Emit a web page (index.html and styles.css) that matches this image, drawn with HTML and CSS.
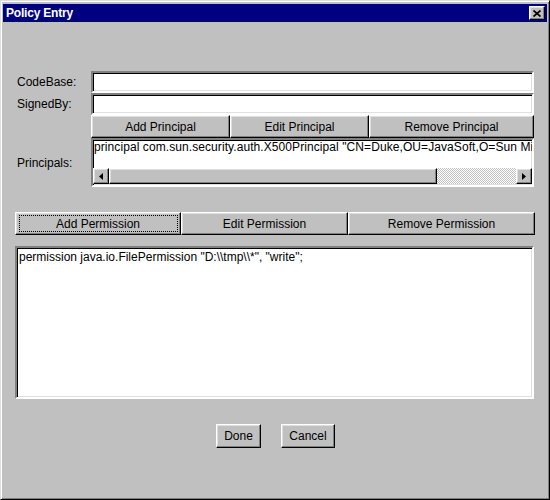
FILE: index.html
```html
<!DOCTYPE html>
<html>
<head>
<meta charset="utf-8">
<link rel="stylesheet" href="styles.css">
</head>
<body>
<div class="window">
  <div class="titlebar">
    <span class="title">Policy Entry</span>
    <button class="close raised"><svg width="8" height="7" viewBox="0 0 8 7"><path d="M0.5 0.5 L7.5 6.5 M7.5 0.5 L0.5 6.5" stroke="#000" stroke-width="1.7" fill="none"/></svg></button>
  </div>
  <div class="content">
    <div class="form">
      <span class="lbl">CodeBase:</span>
      <div class="field sunken"></div>
      <span class="lbl">SignedBy:</span>
      <div class="field sunken"></div>
      <span></span>
      <div class="btnrow principal-btns">
        <button class="btn raised">Add Principal</button>
        <button class="btn raised">Edit Principal</button>
        <button class="btn raised">Remove Principal</button>
      </div>
      <span class="lbl">Principals:</span>
      <div class="list sunken">
        <div class="list-text">principal com.sun.security.auth.X500Principal "CN=Duke,OU=JavaSoft,O=Sun Microsystems,C=US";</div>
        <div class="hscroll">
          <div class="arrow raised"><svg width="4" height="7" viewBox="0 0 4 7"><path d="M4 0 L0 3.5 L4 7 Z" fill="#000"/></svg></div>
          <div class="thumb raised"></div>
          <div class="track"></div>
          <div class="arrow raised"><svg width="4" height="7" viewBox="0 0 4 7"><path d="M0 0 L4 3.5 L0 7 Z" fill="#000"/></svg></div>
        </div>
      </div>
    </div>
    <div class="btnrow perm-btns">
      <button class="btn raised focused">Add Permission</button>
      <button class="btn raised">Edit Permission</button>
      <button class="btn raised">Remove Permission</button>
    </div>
    <div class="textarea sunken">permission java.io.FilePermission "D:\\tmp\\*", "write";</div>
    <div class="actions">
      <button class="btn raised done">Done</button>
      <button class="btn raised cancel">Cancel</button>
    </div>
  </div>
</div>
</body>
</html>
```
FILE: styles.css
```css
html, body {
  margin: 0;
  padding: 0;
  background: #c0c0c0;
}
body {
  font-family: "Liberation Sans", Arial, sans-serif;
  font-size: 12px;
  color: #000;
}
.window {
  box-sizing: border-box;
  width: 550px;
  height: 500px;
  background: #c0c0c0;
  border: 1px solid;
  border-color: #dfdfdf #000 #000 #dfdfdf;
  box-shadow: inset 1px 1px #fff, inset -1px -1px #808080;
  padding: 3px 2px 2px 2px;
  display: flex;
  flex-direction: column;
}
.titlebar {
  height: 18px;
  background: #000080;
  display: flex;
  align-items: center;
  justify-content: space-between;
  padding: 0 2px 0 3px;
  flex: none;
}
.title {
  color: #fff;
  font-weight: bold;
  font-size: 12px;
  letter-spacing: -0.2px;
}
.raised {
  box-sizing: border-box;
  background: #c0c0c0;
  border: 1px solid;
  border-color: #fff #000 #000 #fff;
  box-shadow: inset -1px -1px #808080, inset 1px 1px #dfdfdf;
}
.sunken {
  box-sizing: border-box;
  background: #fff;
  border: 2px solid;
  border-color: #808080 #fff #fff #808080;
  box-shadow: inset 1px 1px #000, inset -1px -1px #dfdfdf;
}
.close {
  width: 16px;
  height: 14px;
  padding: 0;
  margin: 0;
  display: flex;
  align-items: center;
  justify-content: center;
}
.close svg { display: block; }
.content {
  padding: 49px 13px 0 12px;
  display: flex;
  flex-direction: column;
}
.form {
  display: grid;
  grid-template-columns: 76px 1fr;
  grid-template-rows: 22px 22px 23px 49px;
  row-gap: 0;
  align-items: center;
}
.lbl {
  padding-left: 2px;
  white-space: nowrap;
}
.field {
  height: 22px;
}
.btnrow {
  display: grid;
  height: 22px;
}
.principal-btns {
  grid-template-columns: 139px 139px 1fr;
  align-self: start;
  height: 23px;
}
.btn {
  font-family: "Liberation Sans", Arial, sans-serif;
  font-size: 12px;
  color: #000;
  padding: 0;
  margin: 0;
  height: 100%;
  position: relative;
}
.list {
  height: 49px;
  margin-top: 1px;
  align-self: end;
  display: flex;
  flex-direction: column;
  overflow: hidden;
}
.list-text {
  flex: 1;
  white-space: nowrap;
  overflow: hidden;
  padding-left: 1px;
  line-height: 15px;
  letter-spacing: 0.08px;
}
.hscroll {
  height: 16px;
  display: flex;
  flex: none;
  margin-bottom: 1px;
}
.arrow {
  width: 16px;
  height: 16px;
  display: flex;
  align-items: center;
  justify-content: center;
  flex: none;
}
.arrow svg { display: block; }
.thumb {
  width: 328px;
  height: 16px;
  flex: none;
}
.track {
  flex: 1;
  height: 16px;
  background: repeating-conic-gradient(#c0c0c0 0 25%, #fff 0 50%) 0 0 / 2px 2px;
}
.perm-btns {
  margin-top: 25px;
  grid-template-columns: 166px 167px 1fr;
  height: 23px;
  margin-right: -1px;
}
.focused::after {
  content: "";
  position: absolute;
  left: 3px;
  right: 2px;
  top: 2px;
  bottom: 2px;
  border: 1px dotted #000;
}
.textarea {
  margin-top: 11px;
  height: 153px;
  padding: 2px 3px 2px 2px;
  line-height: 14px;
  white-space: pre;
}
.actions {
  margin-top: 25px;
  display: flex;
  justify-content: center;
  gap: 20px;
  padding-left: 2px;
}
.actions .btn {
  height: 24px;
}
.done { width: 45px; }
.cancel { width: 54px; }
```
